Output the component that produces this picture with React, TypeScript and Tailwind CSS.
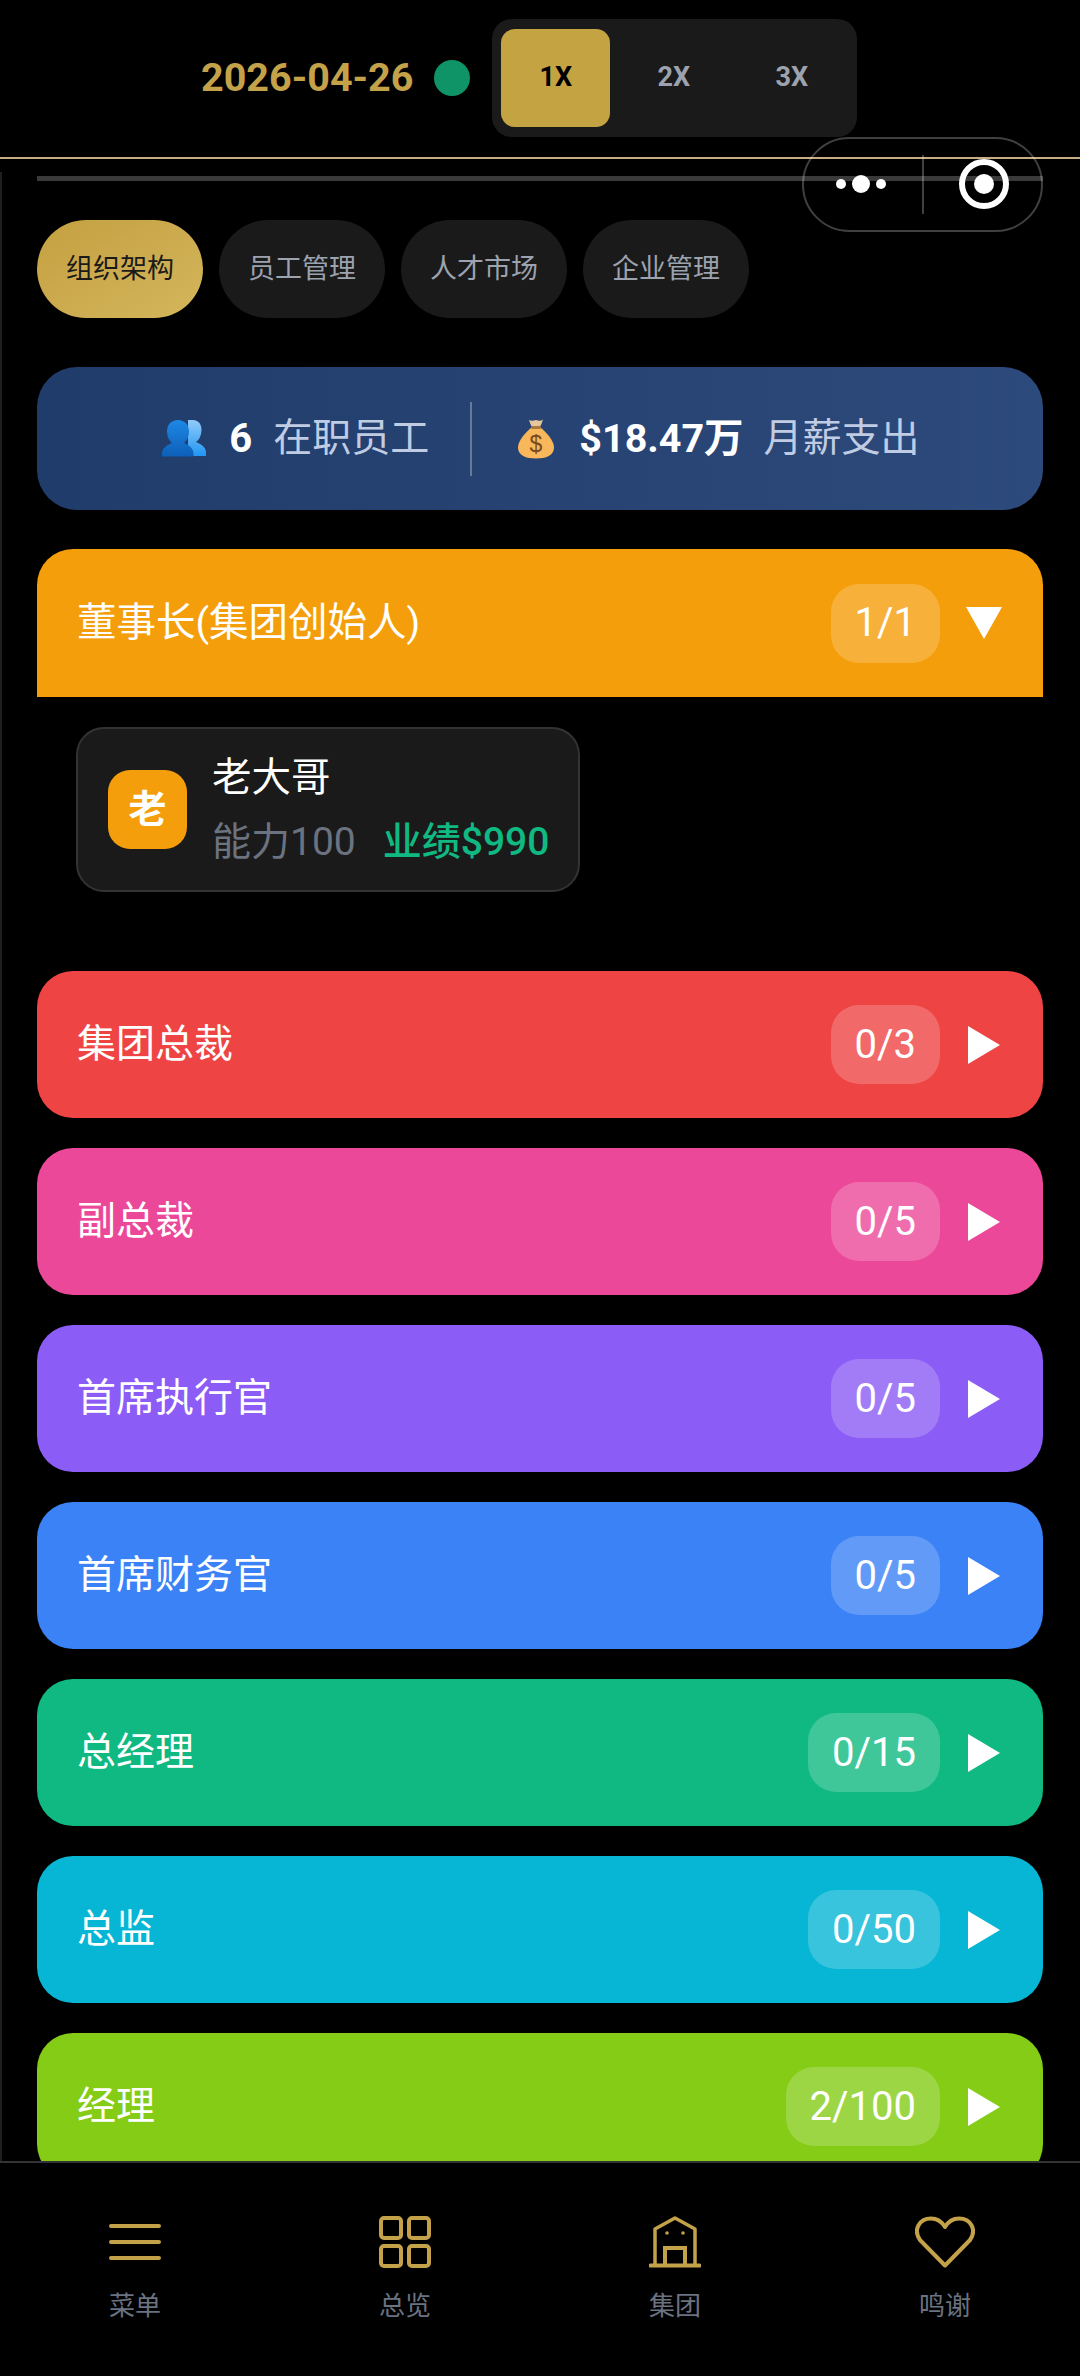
import React from "react";

const rows = [
  { name: "集团总裁", count: "0/3", bg: "bg-[#ef4444]" },
  { name: "副总裁", count: "0/5", bg: "bg-[#ec4899]" },
  { name: "首席执行官", count: "0/5", bg: "bg-[#8b5cf6]" },
  { name: "首席财务官", count: "0/5", bg: "bg-[#3b82f6]" },
  { name: "总经理", count: "0/15", bg: "bg-[#10b981]" },
  { name: "总监", count: "0/50", bg: "bg-[#06b6d4]" },
  { name: "经理", count: "2/100", bg: "bg-[#84cc16]" },
];

function Arrow({ down }: { down?: boolean }) {
  return down ? (
    <svg width="36" height="32" viewBox="0 0 36 32" className="block">
      <polygon points="0,0 36,0 18,32" fill="#fff" />
    </svg>
  ) : (
    <svg width="36" height="38" viewBox="0 0 36 38" className="block">
      <polygon points="2,0 34,19 2,38" fill="#fff" />
    </svg>
  );
}

function Badge({ text }: { text: string }) {
  return (
    <span className="flex h-[79px] items-center rounded-[28px] bg-white/20 px-[24px] text-[40px] text-white">
      {text}
    </span>
  );
}

function Row({ name, count, bg }: { name: string; count: string; bg: string }) {
  return (
    <div className={`flex h-[147px] shrink-0 items-center justify-between rounded-[36px] pl-[40px] pr-[41px] ${bg}`}>
      <span className="text-[39px] text-white">{name}</span>
      <div className="flex items-center gap-[26px]">
        <Badge text={count} />
        <Arrow />
      </div>
    </div>
  );
}

function Busts() {
  return (
    <svg width="44" height="37" viewBox="0 0 44 37" className="block">
      <defs>
        <linearGradient id="b1" x1="0" y1="0" x2="0" y2="1">
          <stop offset="0" stopColor="#1e88e5" />
          <stop offset="1" stopColor="#0d5fb8" />
        </linearGradient>
        <linearGradient id="b2" x1="0" y1="0" x2="0" y2="1">
          <stop offset="0" stopColor="#90caf9" />
          <stop offset="1" stopColor="#2196f3" />
        </linearGradient>
      </defs>
      <path d="M31 0c6 0 9 5 8.500 11-.4 5-2.500 9-5.500 11 4 2 10 4 10 11v3H26V0z" fill="url(#b2)" />
      <path d="M16 0c7 0 11 5 11 11.500 0 5-2 9-5 11.500 5 2 9 5 9.500 10v3.500H0V33c.5-5 5-8 10-10-3-2.500-5-6.500-5-11.500C5 5 9 0 16 0z" fill="url(#b1)" />
    </svg>
  );
}

function Bag() {
  return (
    <svg width="36" height="40" viewBox="0 0 36 40" className="block">
      <path d="M11 1c2 1 4 1 7 0 3 1 5 1 7-.5-1 3-2 6-3.500 8h-7C13 6.500 12 4 11 1z" fill="#e6c79c" />
      <path d="M13.500 8.500h9c6 5 13.500 13 13.500 20 0 8-8 11-18 11S0 36.500 0 28.500c0-7 7.500-15 13.500-20z" fill="#f8b75a" />
      <rect x="13" y="7" width="10" height="3" rx="1.500" fill="#a9793f" />
      <text x="18" y="33" textAnchor="middle" fontSize="23" fill="#7a4a20" fontFamily="'Liberation Sans',sans-serif">$</text>
    </svg>
  );
}

function Nav({ label, children }: { label: string; children: React.ReactNode }) {
  return (
    <div className="flex flex-col items-center">
      <div className="flex h-[52px] items-center justify-center">{children}</div>
      <span className="mt-[20px] text-[26px] leading-[36px] text-[#6b7280]">{label}</span>
    </div>
  );
}

const gold = "#c4a24a";

export default function App() {
  return (
    <div className="relative flex h-[2376px] w-[1080px] flex-col overflow-hidden bg-black font-[Roboto,'Noto_Sans_CJK_SC',sans-serif]">
      <header className="flex h-[159px] shrink-0 items-center border-b-2 border-[#c8ad87] pb-[2px] pl-[201px]">
        <span className="text-[39.500px] font-bold text-[#c4a24a]">2026-04-26</span>
        <span className="ml-[21px] h-[36px] w-[36px] rounded-full bg-[#0f9467]" />
        <div className="ml-[22px] flex h-[118px] w-[365px] items-center gap-[9px] rounded-[20px] bg-[#1a1a1a] px-[9px]">
          <span className="flex h-[98px] w-[109px] items-center justify-center rounded-[14px] bg-[#c4a343] text-[27px] font-bold text-black">1X</span>
          <span className="flex h-[98px] w-[109px] items-center justify-center text-[27px] font-bold text-[#9ca3af]">2X</span>
          <span className="flex h-[98px] w-[109px] items-center justify-center text-[27px] font-bold text-[#9ca3af]">3X</span>
        </div>
      </header>

      <main className="mt-[13px] flex min-h-0 flex-1 flex-col overflow-hidden border-l-2 border-[#1f1f1f] pl-[35px] pr-[37px] pt-[4px]">
        <div className="h-[5px] shrink-0 bg-[#3a3a3a]" />
        <div className="mt-[39px] flex shrink-0 gap-[16px]">
          <span className="flex h-[98px] w-[166px] items-center justify-center rounded-full bg-linear-to-br from-[#c4a040] to-[#d4b65c] text-[27px] text-[#1a1a1a]">组织架构</span>
          {["员工管理", "人才市场", "企业管理"].map((t) => (
            <span key={t} className="flex h-[98px] w-[166px] items-center justify-center rounded-full bg-[#1a1a1a] text-[27px] text-[#9ca3af]">
              {t}
            </span>
          ))}
        </div>

        <div className="mt-[49px] flex h-[143px] shrink-0 items-center justify-center rounded-[40px] bg-linear-to-r from-[#1f3c6a] to-[#2d4a7c] pl-[2px]">
          <Busts />
          <span className="ml-[23px] text-[40px] font-bold text-white">6</span>
          <span className="ml-[21px] text-[39px] text-[#c0cce3]">在职员工</span>
          <span className="ml-[41px] mr-[46px] h-[74px] w-[2px] bg-white/30" />
          <Bag />
          <span className="ml-[25px] text-[39.500px] font-bold text-white">$18.47万</span>
          <span className="ml-[20px] text-[39px] text-[#c0cce3]">月薪支出</span>
        </div>

        <div className="mt-[39px] flex h-[148px] shrink-0 items-center justify-between rounded-t-[36px] bg-[#f59e0b] pl-[40px] pr-[41px]">
          <span className="text-[39.500px] text-white">董事长(集团创始人)</span>
          <div className="flex items-center gap-[26px]">
            <Badge text="1/1" />
            <Arrow down />
          </div>
        </div>

        <div className="shrink-0 pb-[79px] pl-[39px] pt-[30px]">
          <div className="flex h-[165px] w-[504px] items-center gap-[25px] rounded-[28px] border-2 border-[#333333] bg-[#1a1a1a] pl-[30px]">
            <span className="flex h-[79px] w-[79px] shrink-0 items-center justify-center rounded-[22px] bg-[#f59e0b] text-[38px] font-bold text-white">老</span>
            <div className="flex flex-col">
              <span className="text-[39.500px] leading-[50px] text-white">老大哥</span>
              <div className="mt-[14px] flex items-center gap-[27px] text-[39px] leading-[50px]">
                <span className="text-[#6b7280]">能力100</span>
                <span className="font-medium text-[#10b981]">业绩$990</span>
              </div>
            </div>
          </div>
        </div>

        <div className="flex shrink-0 flex-col gap-[30px]">
          {rows.map((r) => (
            <Row key={r.name} {...r} />
          ))}
        </div>
      </main>

      <nav className="grid h-[215px] shrink-0 grid-cols-4 border-t-2 border-[#333333] pt-[53px]">
        <Nav label="菜单">
          <svg width="52" height="36" viewBox="0 0 52 36" className="block">
            <path d="M2 2h48M2 18h48M2 34h48" stroke={gold} strokeWidth="4" strokeLinecap="round" fill="none" />
          </svg>
        </Nav>
        <Nav label="总览">
          <svg width="52" height="52" viewBox="0 0 52 52" fill="none" stroke={gold} strokeWidth="4" className="block">
            <rect x="2" y="2" width="20" height="20" rx="3" />
            <rect x="30" y="2" width="20" height="20" rx="3" />
            <rect x="2" y="30" width="20" height="20" rx="3" />
            <rect x="30" y="30" width="20" height="20" rx="3" />
          </svg>
        </Nav>
        <Nav label="集团">
          <svg width="52" height="52" viewBox="0 0 52 52" fill="none" stroke={gold} strokeWidth="3.500" className="block">
            <path d="M6 50V13L26 2l20 11v37" strokeLinejoin="round" />
            <path d="M16 50V32h20v18" strokeWidth="4" />
            <path d="M1.500 49.500h49" strokeWidth="4" strokeLinecap="round" />
            <circle cx="18" cy="17" r="1.800" fill={gold} stroke="none" />
            <circle cx="34" cy="17" r="1.800" fill={gold} stroke="none" />
          </svg>
        </Nav>
        <Nav label="鸣谢">
          <svg width="60" height="52" viewBox="0 0 60 52" fill="none" stroke={gold} strokeWidth="4" className="block">
            <path d="M30 49.500L5 24C-2 14 4 2.500 16 2.500c6 0 11 3.500 14 8.500 3-5 8-8.500 14-8.500 12 0 18 11.500 11 21.500z" strokeLinejoin="round" />
          </svg>
        </Nav>
      </nav>

      <div className="absolute left-[802px] top-[137px] h-[95px] w-[241px] rounded-full border-2 border-white/25">
        <span className="absolute left-[32px] top-[40px] h-[10px] w-[10px] rounded-full bg-white" />
        <span className="absolute left-[48px] top-[36px] h-[18px] w-[18px] rounded-full bg-white" />
        <span className="absolute left-[72px] top-[40px] h-[10px] w-[10px] rounded-full bg-white" />
        <span className="absolute left-[118px] top-[16px] h-[59px] w-[2px] bg-white/25" />
        <span className="absolute left-[155px] top-[20px] flex h-[50px] w-[50px] items-center justify-center rounded-full border-[6px] border-white">
          <span className="h-[20px] w-[20px] rounded-full bg-white" />
        </span>
      </div>
    </div>
  );
}
